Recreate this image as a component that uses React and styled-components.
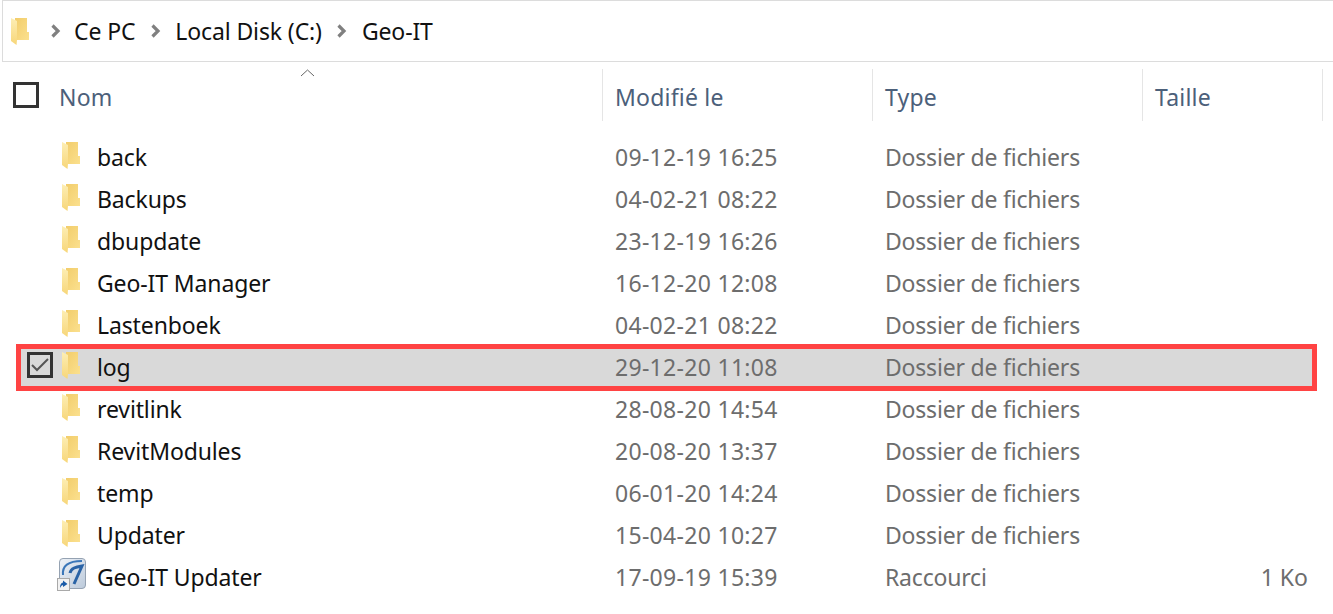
import React from 'react';
import styled, { createGlobalStyle } from 'styled-components';

const Global = createGlobalStyle`
  html, body { margin: 0; padding: 0; background: #fff; }
  body { font-family: "Noto Sans", "Open Sans", sans-serif; overflow: hidden; }
`;

const Page = styled.div`
  width: 1333px;
  height: 614px;
  overflow: hidden;
  background: #fff;
`;

const AddressBar = styled.nav`
  height: 60px;
  margin-left: 2px;
  border: 1px solid #dcdcdc;
  border-right: 0;
  display: flex;
  align-items: center;
  padding-left: 7px;
  color: #111;
  font-size: 23px;
  letter-spacing: -0.12px;
`;

const Crumb = styled.span`
  margin-left: ${p => p.$gap}px;
`;

const Chevron = styled.svg`
  width: 12px;
  height: 14px;
  margin-left: ${p => p.$gap}px;
  flex: none;
`;

const HeaderRow = styled.div`
  position: relative;
  margin-top: 7px;
  height: 52px;
  display: grid;
  grid-template-columns: 602px 270px 270px 180px;
  font-size: 23px;
  letter-spacing: 0.2px;
  color: #4c607a;
`;

const SortCaret = styled.svg`
  position: absolute;
  left: 300px;
  top: 0;
  width: 15px;
  height: 8px;
`;

const HeaderCell = styled.div`
  display: flex;
  align-items: center;
  padding: 3px 0 0 13px;
  border-right: 1px solid #e5e5e5;
  margin-right: -1px;
`;

const HeaderBox = styled.span`
  box-sizing: border-box;
  width: 26px;
  height: 26px;
  margin: 0 20px 3px 0;
  border: 3px solid #333;
`;

const List = styled.div`
  margin-top: 15px;
`;

const Row = styled.div`
  position: relative;
  box-sizing: border-box;
  height: 42px;
  padding-bottom: 1px;
  margin: 0 18px;
  display: grid;
  grid-template-columns: 43px 36px 505px 270px 270px 166px;
  align-items: center;
  font-size: 23px;
  color: #6d6d6d;
  background: ${p => (p.$selected ? '#d9d9d9' : 'transparent')};
`;

const Highlight = styled.div`
  position: absolute;
  left: -2px;
  top: -2px;
  width: 1301px;
  height: 47px;
  box-sizing: border-box;
  border: 5px solid #ff4343;
  pointer-events: none;
`;

const CheckBox = styled.span`
  box-sizing: border-box;
  width: 26px;
  height: 26px;
  margin: 0 0 3px 9px;
  border: 3px solid #333;
  display: flex;
  align-items: center;
  justify-content: center;
`;

const IconCell = styled.span`
  grid-column: 2;
  display: flex;
  align-items: center;
  margin-bottom: 2px;
`;

const ShortcutCell = styled.span`
  grid-column: 1 / span 2;
  display: flex;
  justify-content: flex-end;
  padding-right: 10px;
  margin-bottom: 5px;
`;

const FolderSvg = styled.svg`
  flex: none;
  display: block;
`;

const Name = styled.span`
  grid-column: 3;
  color: #111;
  white-space: nowrap;
  letter-spacing: -0.12px;
`;

const DateCell = styled.span`
  padding-left: 13px;
  white-space: nowrap;
  letter-spacing: 0.3px;
`;

const TypeCell = styled.span`
  padding-left: 13px;
  white-space: nowrap;
  letter-spacing: -0.2px;
`;

const SizeCell = styled.span`
  text-align: right;
  white-space: nowrap;
`;

const Folder = () => (
  <FolderSvg width="20" height="29" viewBox="0 0 20 29">
    <defs>
      <linearGradient id="body" x1="0" y1="0" x2="1" y2="1">
        <stop offset="0" stopColor="#f2cd6b" />
        <stop offset="1" stopColor="#fbe08e" />
      </linearGradient>
      <linearGradient id="flap" x1="0" y1="0" x2="0" y2="1">
        <stop offset="0" stopColor="#fdeeb4" />
        <stop offset="1" stopColor="#f7d679" />
      </linearGradient>
    </defs>
    <path d="M5 1 H17 V15 H19 V23 H5 Z" fill="url(#body)" />
    <path d="M1 1 L7 4 V23 L6.5 28 L1 24 Z" fill="url(#flap)" />
  </FolderSvg>
);

const Shortcut = () => (
  <svg width="30" height="34" viewBox="0 0 30 34">
    <defs>
      <linearGradient id="tile" x1="0" y1="0" x2="1" y2="1">
        <stop offset="0" stopColor="#eef2f7" />
        <stop offset="1" stopColor="#bccadb" />
      </linearGradient>
    </defs>
    <rect x="2.5" y="1.5" width="26" height="30" rx="3.5" fill="url(#tile)" stroke="#95a2b2" />
    <path d="M6 18 C5 9 11 4 25 4" fill="none" stroke="#3a76b8" strokeWidth="2" />
    <path d="M13 16 C14 11 19 10 25 9 L17 27" fill="none" stroke="#2a63a6" strokeWidth="3" />
    <rect x="0.5" y="21.5" width="12" height="12" fill="#f2f2f2" stroke="#a9a9a9" />
    <path d="M3 31 Q3 26 6 25.5 L6 23.5 L10.5 27 L6 30 L6 28 Q4.5 28 3 31 Z" fill="#1b5ca8" />
  </svg>
);

const rows = [
  ['back', '09-12-19 16:25'],
  ['Backups', '04-02-21 08:22'],
  ['dbupdate', '23-12-19 16:26'],
  ['Geo-IT Manager', '16-12-20 12:08'],
  ['Lastenboek', '04-02-21 08:22'],
  ['log', '29-12-20 11:08', true],
  ['revitlink', '28-08-20 14:54'],
  ['RevitModules', '20-08-20 13:37'],
  ['temp', '06-01-20 14:24'],
  ['Updater', '15-04-20 10:27'],
];

const Arrow = ({ gap }) => (
  <Chevron $gap={gap} viewBox="0 0 12 14">
    <path d="M2.5 1.5 L8 7 L2.5 12.5" fill="none" stroke="#808080" strokeWidth="3.2" />
  </Chevron>
);

export default function App() {
  return (
    <Page>
      <Global />
      <AddressBar>
        <Folder />
        <Arrow gap={20} />
        <Crumb $gap={12}>Ce PC</Crumb>
        <Arrow gap={15} />
        <Crumb $gap={13}>Local Disk (C:)</Crumb>
        <Arrow gap={14} />
        <Crumb $gap={14}>Geo-IT</Crumb>
      </AddressBar>
      <HeaderRow>
        <SortCaret viewBox="0 0 15 8">
          <path d="M1 7 L7.5 1 L14 7" fill="none" stroke="#666" strokeWidth="1" />
        </SortCaret>
        <HeaderCell>
          <HeaderBox />
          Nom
        </HeaderCell>
        <HeaderCell>Modifié le</HeaderCell>
        <HeaderCell>Type</HeaderCell>
        <HeaderCell>Taille</HeaderCell>
      </HeaderRow>
      <List>
        {rows.map(([name, date, selected]) => (
          <Row key={name} $selected={selected}>
            {selected && (
              <CheckBox>
                <svg width="20" height="16" viewBox="0 0 20 16">
                  <path d="M2 8 L7 13 L18 2" fill="none" stroke="#555" strokeWidth="2" />
                </svg>
              </CheckBox>
            )}
            <IconCell><Folder /></IconCell>
            <Name>{name}</Name>
            <DateCell>{date}</DateCell>
            <TypeCell>Dossier de fichiers</TypeCell>
            <SizeCell />
            {selected && <Highlight />}
          </Row>
        ))}
        <Row>
          <ShortcutCell><Shortcut /></ShortcutCell>
          <Name>Geo-IT Updater</Name>
          <DateCell>17-09-19 15:39</DateCell>
          <TypeCell>Raccourci</TypeCell>
          <SizeCell>1 Ko</SizeCell>
        </Row>
      </List>
    </Page>
  );
}
